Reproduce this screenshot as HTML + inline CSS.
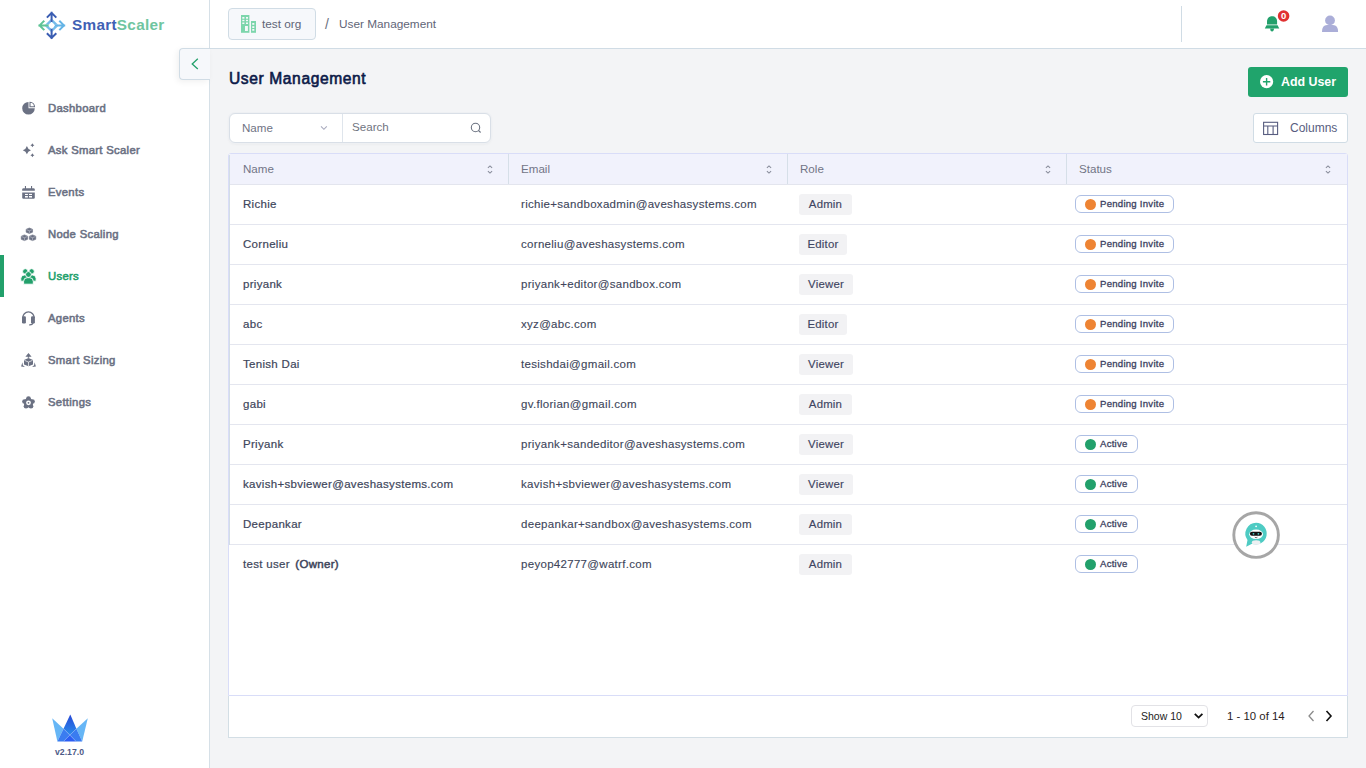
<!DOCTYPE html>
<html><head><meta charset="utf-8">
<style>
*{box-sizing:border-box;margin:0;padding:0}
html,body{width:1366px;height:768px;overflow:hidden;background:#f3f4f6;font-family:"Liberation Sans",sans-serif;position:relative}
.abs{position:absolute}
svg{display:block}
#side{left:0;top:0;width:210px;height:768px;background:#fff;border-right:1px solid #d6e0e7}
.logo-t{left:72px;top:15px;font-size:15.3px;letter-spacing:.3px;font-weight:700;white-space:nowrap;line-height:20px}
.nav{left:0;width:209px;height:42px}
.nav svg{position:absolute;left:18px;top:11px}
.nav .tx{position:absolute;left:48px;top:14px;font-size:11.3px;letter-spacing:.3px;font-weight:400;-webkit-text-stroke:.55px #6b7183;color:#6b7183;line-height:14px;white-space:nowrap}
.nav.act .tx{-webkit-text-stroke-color:#22a06b}
.nav.act .tx{color:#22a06b}
.nav.act:before{content:"";position:absolute;left:0;top:0;width:4px;height:42px;background:#22a06b}
#hdr{left:210px;top:0;width:1156px;height:49px;background:#fff;border-bottom:1px solid #d0dce5}
.chip{left:228px;top:8px;width:88px;height:32px;background:#f6f8fb;border:1px solid #d0dce5;border-radius:4px}
.bc{font-size:11.8px;color:#5f6577;white-space:nowrap;line-height:14px}
#collapse{left:179px;top:48px;width:31px;height:32px;background:#f6f8fb;border:1px solid #d0dce5;border-right:none;border-radius:4px 0 0 4px;box-shadow:-2px 2px 6px rgba(0,0,0,.06)}
.title{left:229px;top:70px;font-size:15.6px;letter-spacing:.6px;font-weight:400;-webkit-text-stroke:.6px #0c1a48;color:#0c1a48;white-space:nowrap;line-height:18px}
.btn-add{left:1248px;top:67px;width:100px;height:30px;background:#20a46c;border-radius:3px}
.btn-col{left:1253px;top:113px;width:95px;height:30px;background:#fff;border:1px solid #d0dce5;border-radius:3px}
.filter{left:229px;top:113px;width:262px;height:30px;background:#fff;border:1px solid #d9dfe7;border-radius:6px;box-shadow:0 0 0 1px #eef0f3,0 1px 3px rgba(0,0,0,.06)}
#tbl{left:228px;top:153px;width:1120px;height:543px;background:#fff;border:1px solid #d9ddf8;border-radius:3px 3px 0 0}
.thead{position:absolute;left:0;top:0;width:1118px;height:31px;background:#f1f2fc;border-bottom:1px solid #e3e5ee}
.th{position:absolute;top:0;height:30px;font-size:11.6px;color:#717586;line-height:30px}
.vdiv{position:absolute;top:0;width:1px;height:30px;background:#d6dfe8}
.sort{position:absolute;top:11px}
.row{position:absolute;left:0;width:1118px;height:40px;border-bottom:1px solid #e4e6ef}
.td{position:absolute;top:0;line-height:39px;font-size:11.5px;letter-spacing:.3px;-webkit-text-stroke:.12px #40465b;color:#40465b;white-space:nowrap}
.role{position:absolute;left:570px;top:9px;height:21px;background:#f2f2f4;border-radius:3px;font-size:11.4px;letter-spacing:.2px;-webkit-text-stroke:.15px #3f4562;color:#3f4562;line-height:21px;text-align:center;padding:0}
.st{position:absolute;left:846px;top:10px;height:18px;border:1px solid #aebfe4;border-radius:6px;background:#fff}
.st .dot{position:absolute;left:9px;top:3px;width:11px;height:11px;border-radius:50%}
.st .l{position:absolute;left:24px;top:0;line-height:16px;font-size:9.6px;letter-spacing:.25px;-webkit-text-stroke:.3px #3b4160;color:#3b4160;white-space:nowrap}
#foot{left:228px;top:696px;width:1120px;height:42px;background:#fff;border:1px solid #d3dee5;border-top:none}

.nm{-webkit-text-stroke:.2px #40465b}

</style></head>
<body>
<div id="side" class="abs">
  <svg class="abs" style="left:36px;top:10px" width="32" height="32" viewBox="0 0 32 32">
    <g fill="#74bcea">
      <path d="M8.4 15.4 L15.6 8.2 L22.8 15.4 L15.6 22.6Z"/>
    </g>
    <g stroke="#fff" stroke-width="1.5" fill="none">
      <path d="M15.6 6 V25"/><path d="M7 15.4 H24"/>
    </g>
    <circle cx="15.6" cy="15.4" r="2.6" fill="#fff"/>
    <g stroke-width="2" fill="none" stroke-linecap="square">
      <path stroke="#3a5db2" d="M15.6 2.8 V11.0 M11.6 6.9 L15.6 2.9 L19.6 6.9"/>
      <path stroke="#3a5db2" d="M15.6 28 V19.8 M11.6 23.9 L15.6 27.9 L19.6 23.9"/>
      <path stroke="#5ec496" d="M3.4 15.4 H11.6 M7.6 11.4 L3.6 15.4 L7.6 19.4"/>
      <path stroke="#64b4e6" d="M28.2 15.4 H19.8 M24 11.4 L28 15.4 L24 19.4"/>
    </g>
  </svg>
  <div class="abs logo-t"><span style="color:#4060b4">Smart</span><span style="color:#6fc5a0">Scaler</span></div>

  <div class="abs nav" style="top:87px">
    <svg width="22" height="22" viewBox="0 0 22 22"><path fill="#6b7183" d="M10.5 4 A6.3 6.3 0 1 0 16.8 10.3 L10.5 10.3 Z"/><path fill="none" stroke="#6b7183" stroke-width="1.1" d="M12 4.2 V8.8 H16.5 A4.6 4.6 0 0 0 12 4.2 Z"/></svg>
    <div class="tx">Dashboard</div></div>
  <div class="abs nav" style="top:129px">
    <svg width="22" height="22" viewBox="0 0 22 22"><g fill="#6b7183"><path d="M8.9 6.1 Q9.72 9.38 13.0 10.2 Q9.72 11.02 8.9 14.299999999999999 Q8.08 11.02 4.800000000000001 10.2 Q8.08 9.38 8.9 6.1Z"/><path d="M14.4 3.2 Q14.84 4.76 16.4 5.2 Q14.84 5.64 14.4 7.2 Q13.96 5.64 12.4 5.2 Q13.96 4.76 14.4 3.2Z"/><path d="M14.4 13.2 Q14.84 14.76 16.4 15.2 Q14.84 15.64 14.4 17.2 Q13.96 15.64 12.4 15.2 Q13.96 14.76 14.4 13.2Z"/></g></svg>
    <div class="tx">Ask Smart Scaler</div></div>
  <div class="abs nav" style="top:171px">
    <svg width="22" height="22" viewBox="0 0 22 22"><g fill="#6b7183"><rect x="6.9" y="4" width="1.1" height="3" /><rect x="13" y="4" width="1.1" height="3"/><path d="M4.2 8.8 V7.6 Q4.2 6.2 5.6 6.2 H15.4 Q16.8 6.2 16.8 7.6 V8.8Z"/><path d="M4.2 10.6 H16.8 V15.6 Q16.8 16.8 15.6 16.8 H5.4 Q4.2 16.8 4.2 15.6Z"/></g><g fill="#fff"><rect x="7" y="11.9" width="2.9" height="1.1"/><rect x="11" y="11.9" width="3" height="1.1"/><rect x="7" y="14" width="2.9" height="1.5"/><rect x="11" y="14" width="3" height="1.5"/></g></svg>
    <div class="tx">Events</div></div>
  <div class="abs nav" style="top:213px">
    <svg width="22" height="22" viewBox="0 0 22 22"><g fill="#6b7183" stroke="#6b7183" stroke-width=".6" stroke-linejoin="round"><path d="M11.35 4.0 L14.55 5.3 V8.2 L11.35 9.5 L8.149999999999999 8.2 V5.3Z"/><path d="M6.45 10.9 L9.65 12.200000000000001 V15.3 L6.45 16.6 L3.25 15.3 V12.200000000000001Z"/><path d="M14.55 10.9 L17.75 12.200000000000001 V15.3 L14.55 16.6 L11.350000000000001 15.3 V12.200000000000001Z"/></g><g stroke="#b9bcc8" stroke-width=".7" fill="none"><path d="M8.4 5.6 L11.35 6.8 L14.3 5.6 M11.35 6.8 V9.4"/><path d="M3.5 12.5 L6.45 13.7 L9.4 12.5 M6.45 13.7 V16.5"/><path d="M11.6 12.5 L14.55 13.7 L17.5 12.5 M14.55 13.7 V16.5"/></g></svg>
    <div class="tx">Node Scaling</div></div>
  <div class="abs nav act" style="top:255px">
    <svg width="22" height="22" viewBox="0 0 22 22"><g fill="#22a06b" stroke="#fff" stroke-width=".9"><circle cx="7.3" cy="5.4" r="2.7"/><circle cx="13.6" cy="5.4" r="2.7"/><path d="M2.8 15.2 V12.6 Q2.8 9 6.4 9 H8 Q11 9 11 12.6 V15.2Z"/><path d="M9.9 15.2 V12.6 Q9.9 9 12.9 9 H14.5 Q18.1 9 18.1 12.6 V15.2Z"/><circle cx="10.45" cy="8.5" r="2.9"/><path d="M5.6 18.2 V15.4 Q5.6 11.7 9.2 11.7 H11.7 Q15.3 11.7 15.3 15.4 V18.2Z"/></g></svg>
    <div class="tx">Users</div></div>
  <div class="abs nav" style="top:297px">
    <svg width="22" height="22" viewBox="0 0 22 22"><path d="M4.65 10 A5.8 6.1 0 0 1 16.25 10" fill="none" stroke="#6b7183" stroke-width="1.3"/><g fill="#6b7183"><rect x="4" y="8.3" width="3.9" height="7.2" rx="1.2"/><rect x="13" y="8.3" width="3.9" height="7.2" rx="1.2"/></g><path d="M15 15 Q14.5 17 11.6 16.9" fill="none" stroke="#6b7183" stroke-width="1.1" stroke-linecap="round"/></svg>
    <div class="tx">Agents</div></div>
  <div class="abs nav" style="top:339px">
    <svg width="22" height="22" viewBox="0 0 22 22"><g fill="#6b7183"><path d="M10.5 3 L13.6 6.7 H11.2 V7.8 H9.8 V6.7 H7.4Z"/><path d="M10.5 8 L15 10.1 V14.5 L10.5 16.2 L6 14.5 V10.1Z"/><path d="M4.4 12.2 L4.9 15.2 L6.9 17 L3.1 16.6Z"/><path d="M16.6 12.2 L16.1 15.2 L14.1 17 L17.9 16.6Z"/></g><path d="M6.4 10.3 L10.5 12.1 L14.6 10.3 M10.5 12.1 V16" fill="none" stroke="#fff" stroke-width=".7"/></svg>
    <div class="tx">Smart Sizing</div></div>
  <div class="abs nav" style="top:381px">
    <svg width="22" height="22" viewBox="0 0 22 22"><g fill="#6b7183"><circle cx="10.50" cy="6.60" r="2.35"/><circle cx="14.49" cy="9.50" r="2.35"/><circle cx="12.97" cy="14.20" r="2.35"/><circle cx="8.03" cy="14.20" r="2.35"/><circle cx="6.51" cy="9.50" r="2.35"/><circle cx="10.5" cy="10.8" r="4.7"/></g><circle cx="10.5" cy="10.8" r="2.4" fill="#fff"/><circle cx="10.5" cy="10.8" r="0.9" fill="#6b7183"/></svg>
    <div class="tx">Settings</div></div>

  <svg class="abs" style="left:48px;top:710px" width="44" height="36" viewBox="0 0 44 36">
    <defs><linearGradient id="cg" x1="0" y1="0" x2="0" y2="1"><stop offset="0" stop-color="#2748d6"/><stop offset="1" stop-color="#2a8cec"/></linearGradient></defs>
    <path d="M4.2 8.2 L15.5 18.7 L9.4 31.6Z" fill="#66b6f6"/>
    <path d="M39.8 8.2 L28.4 18.7 L34.2 31.6Z" fill="#66b6f6"/>
    <path d="M22.3 4.45 L15.5 18.7 L22 24.8 L28.4 18.7Z" fill="url(#cg)"/>
    <path d="M15.5 18.7 L22 24.8 L15.3 31.6 L9.4 31.6Z" fill="#3a7cf0"/>
    <path d="M28.4 18.7 L34.2 31.6 L28.1 31.6 L22 24.8Z" fill="#3a7cf0"/>
    <path d="M22 24.8 L28.1 31.6 L15.3 31.6Z" fill="#2c5ef3"/>
    <path d="M15.5 18.7 L28.1 31.6 M28.4 18.7 L15.3 31.6" stroke="#8fbaf7" stroke-width=".45" fill="none"/>
  </svg>
  <div class="abs" style="left:55px;top:747px;font-size:8.7px;font-weight:700;color:#4d5a86">v2.17.0</div>
</div>

<div id="hdr" class="abs"></div>
<div class="abs chip"></div>
<svg class="abs" style="left:236px;top:12px" width="24" height="24" viewBox="0 0 24 24"><g fill="#7dd6ac"><rect x="5" y="3" width="8.4" height="17.8"/><rect x="15" y="9" width="5" height="11.8"/></g><g fill="#f6f8fb"><rect x="6.3" y="5" width="2.1" height="1.7"/><rect x="10" y="5" width="2" height="1.7"/><rect x="6.3" y="7.8" width="2.1" height="1.4"/><rect x="10" y="7.8" width="2" height="1.4"/><rect x="6.3" y="10.5" width="2.1" height="1.5"/><rect x="10" y="10.5" width="2" height="1.5"/><rect x="9" y="14" width="2.9" height="5"/><rect x="16.25" y="11" width="2.05" height="1.8"/><rect x="16.25" y="14.2" width="2.05" height="1.8"/><rect x="16.25" y="17" width="2.05" height="1.75"/></g></svg>
<div class="abs bc" style="left:262px;top:17px">test org</div>
<div class="abs bc" style="left:325px;top:17px;font-size:14px;color:#6b7080">/</div>
<div class="abs bc" style="left:339px;top:17px">User Management</div>
<div class="abs" style="left:1181px;top:6px;width:1px;height:36px;background:#d0dce5"></div>
<svg class="abs" style="left:1258px;top:6px" width="36" height="30" viewBox="0 0 36 30"><g fill="#22a06b"><path d="M9 18.6 V15.6 C9 12.2 11 10.2 14.05 10.2 C17.1 10.2 19.1 12.2 19.1 15.6 V18.6Z"/><path d="M8.5 19.3 H19.6 L21.3 22.6 H6.8Z"/><path d="M12.1 22.6 H16 Q16 25.4 14.05 25.4 Q12.1 25.4 12.1 22.6Z"/></g><circle cx="25.6" cy="10" r="5.8" fill="#e03131"/><text x="25.6" y="13.3" text-anchor="middle" font-family="Liberation Sans" font-weight="700" font-size="9.5" fill="#fff">0</text></svg>
<svg class="abs" style="left:1316px;top:10px" width="28" height="28" viewBox="0 0 28 28"><g fill="#abaed8"><circle cx="14" cy="10.4" r="4.9"/><path d="M6 21.9 Q6 15 11 15 H17 Q22.1 15 22.1 21.9Z"/></g></svg>

<div id="collapse" class="abs"></div>
<svg class="abs" style="left:179px;top:48px" width="31" height="32" viewBox="0 0 31 32"><path d="M18.8 10.7 L13.2 15.9 L18.8 21.1" fill="none" stroke="#22a06b" stroke-width="1.3"/></svg>

<div class="abs title">User Management</div>
<div class="abs btn-add"></div>
<svg class="abs" style="left:1256px;top:68px" width="34" height="28" viewBox="0 0 34 28"><circle cx="10.6" cy="13.7" r="6.6" fill="#fff"/><path d="M6.9 13.7 H14.3 M10.6 10 V17.4" stroke="#20a46c" stroke-width="1.4"/></svg>
<div class="abs" style="left:1281px;top:74px;font-size:12.4px;font-weight:700;color:#fff;line-height:16px;white-space:nowrap">Add User</div>

<div class="abs btn-col"></div>
<svg class="abs" style="left:1258px;top:114px" width="28" height="28" viewBox="0 0 28 28"><g fill="none" stroke="#585d80" stroke-width="1.1"><rect x="5.6" y="8.3" width="14" height="12.2"/><path d="M5.6 12 H19.6 M9.8 12 V20.5 M15.1 12 V20.5"/></g></svg>
<div class="abs" style="left:1290px;top:121px;font-size:12px;color:#585d80;line-height:14px;white-space:nowrap">Columns</div>

<div class="abs filter"></div>
<div class="abs" style="left:342px;top:114px;width:1px;height:28px;background:#dfe5ec"></div>
<div class="abs" style="left:242px;top:121px;font-size:11.6px;color:#6f7384;line-height:14px">Name</div>
<svg class="abs" style="left:312px;top:116px" width="28" height="24" viewBox="0 0 28 24"><path d="M9 10.3 L11.9 13.3 L14.8 10.3" fill="none" stroke="#a9abbe" stroke-width="1.1"/></svg>
<div class="abs" style="left:352px;top:120px;font-size:11.6px;color:#70747f;line-height:14px">Search</div>
<svg class="abs" style="left:462px;top:114px" width="30" height="28" viewBox="0 0 30 28"><circle cx="13.5" cy="13.5" r="4.2" fill="none" stroke="#6b7280" stroke-width="1.1"/><path d="M16.5 16.5 L18.6 18.5" stroke="#6b7280" stroke-width="1.1"/></svg>

<div id="tbl" class="abs">
  <div class="thead">
    <div class="th" style="left:14px">Name</div>
    <div class="th" style="left:292px">Email</div>
    <div class="th" style="left:571px">Role</div>
    <div class="th" style="left:850px">Status</div>
    <svg class="sort" style="left:257px" width="8" height="9" viewBox="0 0 8 9"><path d="M1.9 2.9 L4 0.9 L6.1 2.9 M1.9 6.1 L4 8.1 L6.1 6.1" fill="none" stroke="#8a8e9c" stroke-width="1.1"/></svg><svg class="sort" style="left:536px" width="8" height="9" viewBox="0 0 8 9"><path d="M1.9 2.9 L4 0.9 L6.1 2.9 M1.9 6.1 L4 8.1 L6.1 6.1" fill="none" stroke="#8a8e9c" stroke-width="1.1"/></svg><svg class="sort" style="left:815px" width="8" height="9" viewBox="0 0 8 9"><path d="M1.9 2.9 L4 0.9 L6.1 2.9 M1.9 6.1 L4 8.1 L6.1 6.1" fill="none" stroke="#8a8e9c" stroke-width="1.1"/></svg><svg class="sort" style="left:1095px" width="8" height="9" viewBox="0 0 8 9"><path d="M1.9 2.9 L4 0.9 L6.1 2.9 M1.9 6.1 L4 8.1 L6.1 6.1" fill="none" stroke="#8a8e9c" stroke-width="1.1"/></svg>
    <div class="vdiv" style="left:279px"></div>
    <div class="vdiv" style="left:558px"></div>
    <div class="vdiv" style="left:837px"></div>
  </div>
<div class='row' style='top:31px'><div class='td nm' style='left:14px'>Richie</div><div class='td' style='left:292px'>richie+sandboxadmin@aveshasystems.com</div><div class='role' style='width:53px'>Admin</div><div class='st' style='width:99px'><i class='dot' style='background:#ee8433'></i><span class='l'>Pending Invite</span></div></div>
<div class='row' style='top:71px'><div class='td nm' style='left:14px'>Corneliu</div><div class='td' style='left:292px'>corneliu@aveshasystems.com</div><div class='role' style='width:48px'>Editor</div><div class='st' style='width:99px'><i class='dot' style='background:#ee8433'></i><span class='l'>Pending Invite</span></div></div>
<div class='row' style='top:111px'><div class='td nm' style='left:14px'>priyank</div><div class='td' style='left:292px'>priyank+editor@sandbox.com</div><div class='role' style='width:54px'>Viewer</div><div class='st' style='width:99px'><i class='dot' style='background:#ee8433'></i><span class='l'>Pending Invite</span></div></div>
<div class='row' style='top:151px'><div class='td nm' style='left:14px'>abc</div><div class='td' style='left:292px'>xyz@abc.com</div><div class='role' style='width:48px'>Editor</div><div class='st' style='width:99px'><i class='dot' style='background:#ee8433'></i><span class='l'>Pending Invite</span></div></div>
<div class='row' style='top:191px'><div class='td nm' style='left:14px'>Tenish Dai</div><div class='td' style='left:292px'>tesishdai@gmail.com</div><div class='role' style='width:54px'>Viewer</div><div class='st' style='width:99px'><i class='dot' style='background:#ee8433'></i><span class='l'>Pending Invite</span></div></div>
<div class='row' style='top:231px'><div class='td nm' style='left:14px'>gabi</div><div class='td' style='left:292px'>gv.florian@gmail.com</div><div class='role' style='width:53px'>Admin</div><div class='st' style='width:99px'><i class='dot' style='background:#ee8433'></i><span class='l'>Pending Invite</span></div></div>
<div class='row' style='top:271px'><div class='td nm' style='left:14px'>Priyank</div><div class='td' style='left:292px'>priyank+sandeditor@aveshasystems.com</div><div class='role' style='width:54px'>Viewer</div><div class='st' style='width:63px'><i class='dot' style='background:#22a06b'></i><span class='l'>Active</span></div></div>
<div class='row' style='top:311px'><div class='td nm' style='left:14px'>kavish+sbviewer@aveshasystems.com</div><div class='td' style='left:292px'>kavish+sbviewer@aveshasystems.com</div><div class='role' style='width:54px'>Viewer</div><div class='st' style='width:63px'><i class='dot' style='background:#22a06b'></i><span class='l'>Active</span></div></div>
<div class='row' style='top:351px'><div class='td nm' style='left:14px'>Deepankar</div><div class='td' style='left:292px'>deepankar+sandbox@aveshasystems.com</div><div class='role' style='width:53px'>Admin</div><div class='st' style='width:63px'><i class='dot' style='background:#22a06b'></i><span class='l'>Active</span></div></div>
<div class='row' style='top:391px;border-bottom:none'><div class='td nm' style='left:14px'>test user <span style='margin-left:2px;-webkit-text-stroke:.5px #40465b'>(Owner)</span></div><div class='td' style='left:292px'>peyop42777@watrf.com</div><div class='role' style='width:53px'>Admin</div><div class='st' style='width:63px'><i class='dot' style='background:#22a06b'></i><span class='l'>Active</span></div></div>
  <div class="abs" style="left:0;top:1px;width:1px;height:390px;background:#d3dde6"></div>
</div>
<div id="foot" class="abs">
  <div class="abs" style="left:902px;top:9px;width:77px;height:22px;border:1px solid #e2e2e6;border-radius:4px;background:#fff"></div>
  <div class="abs" style="left:912px;top:13px;font-size:10.5px;color:#222;line-height:14px;white-space:nowrap">Show 10</div>
  <svg class="abs" style="left:964px;top:15px" width="12" height="10" viewBox="0 0 12 10"><path d="M1.8 2.8 L5.6 6.6 L9.4 2.8" fill="none" stroke="#111" stroke-width="1.8"/></svg>
  <div class="abs" style="left:998px;top:13px;font-size:11.4px;color:#2b1d1d;line-height:14px;white-space:nowrap">1 - 10 of 14</div>
  <svg class="abs" style="left:1077px;top:13px" width="10" height="14" viewBox="0 0 10 14"><path d="M7.5 2 L3 7 L7.5 12" fill="none" stroke="#8a8a8a" stroke-width="1.3"/></svg>
  <svg class="abs" style="left:1095px;top:13px" width="10" height="14" viewBox="0 0 10 14"><path d="M2.5 2 L7 7 L2.5 12" fill="none" stroke="#111" stroke-width="1.6"/></svg>
</div>
<svg class="abs" style="left:1228px;top:507px" width="56" height="56" viewBox="0 0 56 56">
  <circle cx="28.1" cy="28.1" r="22.3" fill="#fff" stroke="#a6a6a6" stroke-width="2.9"/>
  <path d="M28.1 15.7 A10.9 10.9 0 1 1 24 36.8 L18.2 39.7 L19.5 33 A10.9 10.9 0 0 1 28.1 15.7Z" fill="#4ecbc3"/>
  <circle cx="28.1" cy="19.3" r="0.9" fill="#fff"/>
  <ellipse cx="28.1" cy="27.3" rx="6.9" ry="4.8" fill="#fff"/>
  <rect x="21.9" y="24.8" width="12" height="4" rx="2" fill="#111"/>
  <circle cx="25.5" cy="26.8" r="0.9" fill="#4ecbc3"/><circle cx="30.4" cy="26.8" r="0.9" fill="#4ecbc3"/>
  <path d="M26.8 30.2 Q28.1 31.4 29.4 30.2" fill="none" stroke="#111" stroke-width=".6"/>
  <ellipse cx="28.1" cy="35.5" rx="4.3" ry="2.3" fill="#eef0f2"/>
</svg>

</body></html>
